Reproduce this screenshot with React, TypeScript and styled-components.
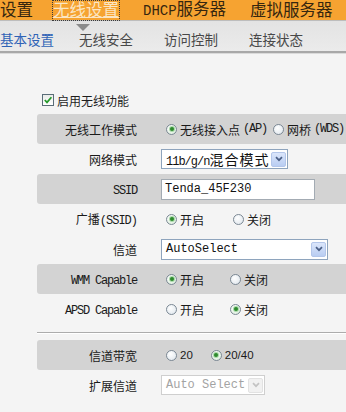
import React from 'react';
import styled, { createGlobalStyle, css } from 'styled-components';

const GlobalStyle = createGlobalStyle`
  html, body {
    margin: 0;
    padding: 0;
    background: #f4f4f4;
  }
  body {
    font-family: "Noto Sans CJK SC", sans-serif;
    font-size: 12px;
    color: #222;
  }
`;

const Page = styled.div`
  width: 346px;
  height: 412px;
  overflow: hidden;
  background: #f4f4f4;
`;

const TopBar = styled.div`
  height: 20px;
  background: #f6a331;
  display: flex;
  align-items: center;
  gap: 24px;
  position: relative;
  z-index: 2;
`;

// Latin primary font keeps the line box inside the 20px bar, CJK falls back
const TopItem = styled.span<{ $active?: boolean }>`
  position: relative;
  font-family: "Liberation Sans", "Noto Sans CJK SC", sans-serif;
  font-size: 16.5px;
  line-height: 19px;
  color: #35260f;
  white-space: nowrap;
  &:first-child {
    margin-right: -4px;
  }
  ${(p) =>
    p.$active &&
    css`
      color: #fbe6c3;
      text-decoration: underline;
      outline: 1px dotted #3a3a3a;
      outline-offset: 0;
      &::after {
        content: '';
        position: absolute;
        left: 50%;
        top: calc(100% + 4px);
        margin-left: -10px;
        border-left: 7px solid transparent;
        border-right: 7px solid transparent;
        border-top: 7px solid #8b8b8b;
      }
    `}
`;

const Mono = styled.span<{ $size: number; $track?: number }>`
  font-family: "Liberation Mono", monospace;
  font-size: ${(p) => p.$size}px;
  letter-spacing: ${(p) => p.$track ?? 0}px;
`;

const SubBar = styled.div`
  height: 33px;
  box-sizing: border-box;
  padding-top: 5px;
  border-top: 1px solid #bdbdbd;
  border-bottom: 2px solid #a8a8a8;
  background: linear-gradient(#e3e3e3, #ebebeb);
  box-shadow: 0 1px 0 #dadada;
  display: flex;
  align-items: center;
  gap: 31px;
`;

const SubItem = styled.span<{ $active?: boolean }>`
  font-size: 13.5px;
  color: ${(p) => (p.$active ? '#2f63b6' : '#484848')};
  white-space: nowrap;
  &:first-child {
    margin-right: -6px;
  }
`;

const Content = styled.div`
  padding: 39px 0 0 37px;
`;

const EnableRow = styled.label`
  display: flex;
  align-items: center;
  gap: 3px;
  height: 16px;
  margin: 0 0 6px 5px;
  font-size: 12px;
  color: #1e1e1e;
`;

const CheckBox = styled.span`
  width: 12px;
  height: 12px;
  box-sizing: border-box;
  border: 1px solid #5a6d78;
  background: linear-gradient(#e9ece9, #ffffff);
  display: inline-flex;
  align-items: center;
  justify-content: center;
`;

const Table = styled.div`
  display: flex;
  flex-direction: column;
`;

const Row = styled.div<{ $shade?: boolean }>`
  display: grid;
  grid-template-columns: 112px 1fr;
  align-items: center;
  height: 30px;
  background: ${(p) => (p.$shade ? '#d3d3d3' : 'transparent')};
  border-radius: 3px 0 0 3px;
`;

const Label = styled.div`
  text-align: right;
  padding-right: 12px;
  white-space: nowrap;
  font-size: 12px;
  color: #1a1a1a;
`;

const Value = styled.div`
  display: flex;
  align-items: center;
  padding-left: 12px;
  white-space: nowrap;
`;

const RadioGroup = styled.div`
  display: flex;
  align-items: center;
  padding-left: 5px;
`;

const Option = styled.span<{ $gap?: number }>`
  display: inline-flex;
  align-items: center;
  gap: 3px;
  margin-right: ${(p) => p.$gap ?? 0}px;
  font-size: 12px;
  color: #1a1a1a;
`;

const RadioDot = styled.span<{ $on?: boolean }>`
  position: relative;
  flex: none;
  width: 11px;
  height: 11px;
  box-sizing: border-box;
  border-radius: 50%;
  border: 1px solid #7b8894;
  background: radial-gradient(circle at 40% 35%, #ffffff, #dbe3ea);
  ${(p) =>
    p.$on &&
    css`
      background: radial-gradient(circle at 40% 35%, #ffffff, #d6ead6);
      &::after {
        content: '';
        position: absolute;
        left: 50%;
        top: 50%;
        width: 4px;
        height: 4px;
        margin: -2px 0 0 -2px;
        border-radius: 50%;
        background: #2e8a2e;
        box-shadow: 0 0 0 1px #a8d9a8;
      }
    `}
`;

const Num = styled.span`
  font-family: "Liberation Sans", sans-serif;
  font-size: 11.5px;
`;

const SelectBox = styled.div<{ $w: number; $h: number; $disabled?: boolean }>`
  width: ${(p) => p.$w}px;
  height: ${(p) => p.$h}px;
  box-sizing: border-box;
  border: 1px solid ${(p) => (p.$disabled ? '#cfcfcf' : '#8ea4bd')};
  background: #fff;
  display: flex;
  align-items: center;
  justify-content: space-between;
  padding: 0 1px 0 4px;
  font-family: "Liberation Mono", "Noto Sans CJK SC", monospace;
  font-size: 12px;
  color: ${(p) => (p.$disabled ? '#a3a3a3' : '#111')};
`;

const TextInput = styled.div<{ $w: number }>`
  width: ${(p) => p.$w}px;
  height: 21px;
  box-sizing: border-box;
  border: 1px solid #a3abb3;
  background: #fff;
  display: flex;
  align-items: center;
  padding-left: 3px;
  font-family: "Liberation Mono", monospace;
  font-size: 12px;
  color: #111;
`;

const Arrow = styled.span<{ $disabled?: boolean }>`
  width: 15px;
  height: 15px;
  box-sizing: border-box;
  border-radius: 2px;
  border: 1px solid ${(p) => (p.$disabled ? '#e2e2e2' : '#b3c6ea')};
  background: ${(p) =>
    p.$disabled ? '#f1f1f1' : 'linear-gradient(#dbe6fb, #b9cdf2)'};
  display: inline-flex;
  align-items: center;
  justify-content: center;
`;

const Cjk = styled.span`
  font-family: "Noto Sans CJK SC", sans-serif;
  font-size: 14px;
  letter-spacing: 1px;
`;

const Separator = styled.div`
  height: 1px;
  background: #acacac;
  box-shadow: 0 1px 0 #ffffff;
  margin: 8px 0 7px;
`;

const Chevron = ({ off }: { off?: boolean }) => (
  <svg width="8" height="6" viewBox="0 0 8 6">
    <path d="M1 1.2 L4 4.2 L7 1.2" fill="none" stroke={off ? '#c3c3c3' : '#4b5f86'} strokeWidth="1.7" />
  </svg>
);

type Opt = { text: React.ReactNode; on?: boolean; gap?: number };

const Radios = ({ items }: { items: Opt[] }) => (
  <RadioGroup>
    {items.map((o, i) => (
      <Option key={i} $gap={o.gap}>
        <RadioDot $on={o.on} />
        {o.text}
      </Option>
    ))}
  </RadioGroup>
);

export default function App() {
  return (
    <Page>
      <GlobalStyle />
      <TopBar>
        <TopItem>设置</TopItem>
        <TopItem $active>无线设置</TopItem>
        <TopItem>
          <Mono $size={14}>DHCP</Mono>服务器
        </TopItem>
        <TopItem>虚拟服务器</TopItem>
      </TopBar>
      <SubBar>
        <SubItem $active>基本设置</SubItem>
        <SubItem>无线安全</SubItem>
        <SubItem>访问控制</SubItem>
        <SubItem>连接状态</SubItem>
      </SubBar>

      <Content>
        <EnableRow>
          <CheckBox>
            <svg width="10" height="10" viewBox="0 0 10 10">
              <path d="M1.8 5 L4 7.4 L8.4 2.2" fill="none" stroke="#24992a" strokeWidth="1.7" />
            </svg>
          </CheckBox>
          启用无线功能
        </EnableRow>

        <Table>
          <Row $shade>
            <Label>无线工作模式</Label>
            <Value>
              <Radios
                items={[
                  { text: <>无线接入点<Mono $size={12} $track={-1.2}>(AP)</Mono></>, on: true, gap: 6 },
                  { text: <>网桥<Mono $size={12} $track={-1.2}>(WDS)</Mono></> },
                ]}
              />
            </Value>
          </Row>
          <Row>
            <Label>网络模式</Label>
            <Value>
              <SelectBox $w={127} $h={20}>
                <span>
                  <Mono $size={12} $track={-1}>11b/g/n</Mono>
                  <Cjk>混合模式</Cjk>
                </span>
                <Arrow>
                  <Chevron />
                </Arrow>
              </SelectBox>
            </Value>
          </Row>
          <Row $shade>
            <Label>
              <Mono $size={12} $track={-1.2}>SSID</Mono>
            </Label>
            <Value>
              <TextInput $w={154}>Tenda_45F230</TextInput>
            </Value>
          </Row>
          <Row>
            <Label>
              广播<Mono $size={12} $track={-1}>(SSID)</Mono>
            </Label>
            <Value>
              <Radios items={[{ text: '开启', on: true, gap: 29 }, { text: '关闭' }]} />
            </Value>
          </Row>
          <Row>
            <Label>信道</Label>
            <Value>
              <SelectBox $w={167} $h={21}>
                <span>AutoSelect</span>
                <Arrow>
                  <Chevron />
                </Arrow>
              </SelectBox>
            </Value>
          </Row>
          <Row $shade>
            <Label>
              <Mono $size={12} $track={-1.2}>WMM Capable</Mono>
            </Label>
            <Value>
              <Radios items={[{ text: '开启', on: true, gap: 26 }, { text: '关闭' }]} />
            </Value>
          </Row>
          <Row>
            <Label>
              <Mono $size={12} $track={-1.2}>APSD Capable</Mono>
            </Label>
            <Value>
              <Radios items={[{ text: '开启', gap: 26 }, { text: '关闭', on: true }]} />
            </Value>
          </Row>

          <Separator />

          <Row $shade>
            <Label>信道带宽</Label>
            <Value>
              <Radios
                items={[
                  { text: <Num>20</Num>, gap: 18 },
                  { text: <Num>20/40</Num>, on: true },
                ]}
              />
            </Value>
          </Row>
          <Row>
            <Label>扩展信道</Label>
            <Value>
              <SelectBox $w={104} $h={20} $disabled>
                <span>Auto Select</span>
                <Arrow $disabled>
                  <Chevron off />
                </Arrow>
              </SelectBox>
            </Value>
          </Row>
        </Table>
      </Content>
    </Page>
  );
}
